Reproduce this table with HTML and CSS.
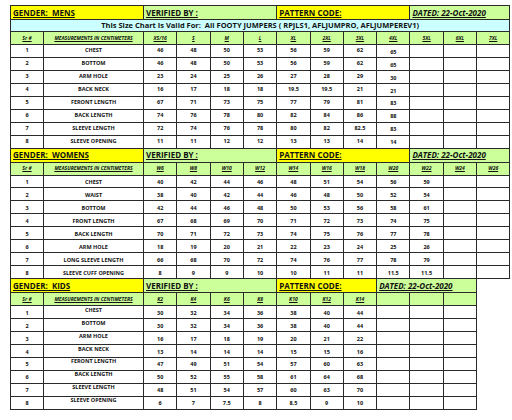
FILE: index.html
```html
<!DOCTYPE html>
<html>
<head>
<meta charset="utf-8">
<link rel="stylesheet" href="styles.css">
</head>
<body>
<div class="sheet">
<table class="chart full">
<colgroup><col class="sr"><col class="ms"><col class="sz"><col class="sz"><col class="sz"><col class="sz"><col class="sz"><col class="sz"><col class="sz"><col class="sz"><col class="sz"><col class="sz"><col class="sz"></colgroup>
<tr class="hdr"><td colspan="2" class="y"><span>GENDER:&nbsp; MENS</span></td><td colspan="4" class="g"><span>VERIFIED BY :</span></td><td colspan="4" class="y"><span>PATTERN CODE:</span></td><td colspan="3" class="g dated"><span>DATED: 22-Oct-2020</span></td></tr>
<tr class="title"><td colspan="13">This Size Chart Is Valid For:&nbsp; All FOOTY JUMPERS ( RPJLS1, AFLJUMPRO, AFLJUMPEREV1)</td></tr>
<tr class="colhdr"><td>Sr #</td><td>MEASUREMENTS IN CENTIMETERS</td><td>XS/16</td><td>S</td><td>M</td><td>L</td><td>XL</td><td>2XL</td><td>3XL</td><td>4XL</td><td>5XL</td><td>6XL</td><td>7XL</td></tr>
<tr class="data"><td>1</td><td>CHEST</td><td>46</td><td>48</td><td>50</td><td>53</td><td>56</td><td>59</td><td>62</td><td class="low">65</td><td></td><td></td><td></td></tr>
<tr class="data"><td>2</td><td>BOTTOM</td><td>46</td><td>48</td><td>50</td><td>53</td><td>56</td><td>59</td><td>62</td><td class="low">65</td><td></td><td></td><td></td></tr>
<tr class="data"><td>3</td><td>ARM HOLE</td><td>23</td><td>24</td><td>25</td><td>26</td><td>27</td><td>28</td><td>29</td><td class="low">30</td><td></td><td></td><td></td></tr>
<tr class="data"><td>4</td><td>BACK NECK</td><td>16</td><td>17</td><td>18</td><td>18</td><td>19.5</td><td>19.5</td><td>21</td><td class="low">21</td><td></td><td></td><td></td></tr>
<tr class="data"><td>5</td><td>FERONT LENGTH</td><td>67</td><td>71</td><td>73</td><td>75</td><td>77</td><td>79</td><td>81</td><td class="low">83</td><td></td><td></td><td></td></tr>
<tr class="data"><td>6</td><td>BACK LENGTH</td><td>74</td><td>76</td><td>78</td><td>80</td><td>82</td><td>84</td><td>86</td><td class="low">88</td><td></td><td></td><td></td></tr>
<tr class="data"><td>7</td><td>SLEEVE LENGTH</td><td>72</td><td>74</td><td>76</td><td>78</td><td>80</td><td>82</td><td>82.5</td><td class="low">83</td><td></td><td></td><td></td></tr>
<tr class="data"><td>8</td><td>SLEEVE OPENING</td><td>11</td><td>11</td><td>12</td><td>12</td><td>13</td><td>13</td><td>14</td><td class="low">14</td><td></td><td></td><td></td></tr>

<tr class="hdr"><td colspan="2" class="y"><span>GENDER:&nbsp; WOMENS</span></td><td colspan="4" class="g"><span>VERIFIED BY :</span></td><td colspan="4" class="y"><span>PATTERN CODE:</span></td><td colspan="3" class="g dated"><span>DATED: 22-Oct-2020</span></td></tr>
<tr class="colhdr"><td>Sr #</td><td>MEASUREMENTS IN CENTIMETERS</td><td>W6</td><td>W8</td><td>W10</td><td>W12</td><td>W14</td><td>W16</td><td>W18</td><td>W20</td><td>W22</td><td>W24</td><td>W26</td></tr>
<tr class="data lows"><td>1</td><td>CHEST</td><td>40</td><td>42</td><td>44</td><td>46</td><td>48</td><td>51</td><td>54</td><td>56</td><td>59</td><td></td><td></td></tr>
<tr class="data lows"><td>2</td><td>WAIST</td><td>38</td><td>40</td><td>42</td><td>44</td><td>46</td><td>48</td><td>50</td><td>52</td><td>54</td><td></td><td></td></tr>
<tr class="data lows"><td>3</td><td>BOTTOM</td><td>42</td><td>44</td><td>46</td><td>48</td><td>50</td><td>53</td><td>56</td><td>58</td><td>61</td><td></td><td></td></tr>
<tr class="data lows"><td>4</td><td>FRONT LENGTH</td><td>67</td><td>68</td><td>69</td><td>70</td><td>71</td><td>72</td><td>73</td><td>74</td><td>75</td><td></td><td></td></tr>
<tr class="data lows"><td>5</td><td>BACK LENGTH</td><td>70</td><td>71</td><td>72</td><td>73</td><td>74</td><td>75</td><td>76</td><td>77</td><td>78</td><td></td><td></td></tr>
<tr class="data lows"><td>6</td><td>ARM HOLE</td><td>18</td><td>19</td><td>20</td><td>21</td><td>22</td><td>23</td><td>24</td><td>25</td><td>26</td><td></td><td></td></tr>
<tr class="data lows"><td>7</td><td>LONG SLEEVE LENGTH</td><td>66</td><td>68</td><td>70</td><td>72</td><td>74</td><td>76</td><td>77</td><td>78</td><td>79</td><td></td><td></td></tr>
<tr class="data lows"><td>8</td><td>SLEEVE CUFF OPENING</td><td>8</td><td>9</td><td>9</td><td>10</td><td>10</td><td>11</td><td>11</td><td>11.5</td><td>11.5</td><td></td><td></td></tr>
</table>

<table class="chart kids">
<colgroup><col class="sr"><col class="ms"><col class="sz"><col class="sz"><col class="sz"><col class="sz"><col class="sz"><col class="sz"><col class="sz"><col class="sz"><col class="sz"><col class="sz"></colgroup>
<tr class="hdr"><td colspan="2" class="y"><span>GENDER:&nbsp; KIDS</span></td><td colspan="4" class="g"><span>VERIFIED BY :</span></td><td colspan="3" class="y"><span>PATTERN CODE:</span></td><td colspan="3" class="g dated"><span>DATED: 22-Oct-2020</span></td></tr>
<tr class="colhdr"><td>Sr #</td><td>MEASUREMENTS IN CENTIMETERS</td><td>K2</td><td>K4</td><td>K6</td><td>K8</td><td>K10</td><td>K12</td><td>K14</td><td></td><td></td><td></td></tr>
<tr class="data lows"><td>1</td><td class="hi">CHEST</td><td>30</td><td>32</td><td>34</td><td>36</td><td>38</td><td>40</td><td>44</td><td></td><td></td><td></td></tr>
<tr class="data lows"><td>2</td><td class="hi">BOTTOM</td><td>30</td><td>32</td><td>34</td><td>36</td><td>38</td><td>40</td><td>44</td><td></td><td></td><td></td></tr>
<tr class="data lows"><td>3</td><td class="hi">ARM HOLE</td><td>16</td><td>17</td><td>18</td><td>19</td><td>20</td><td>21</td><td>22</td><td></td><td></td><td></td></tr>
<tr class="data lows"><td>4</td><td class="hi">BACK NECK</td><td>13</td><td>14</td><td>14</td><td>14</td><td>15</td><td>15</td><td>16</td><td></td><td></td><td></td></tr>
<tr class="data lows"><td>5</td><td class="hi">FERONT LENGTH</td><td>47</td><td>49</td><td>51</td><td>54</td><td>57</td><td>60</td><td>63</td><td></td><td></td><td></td></tr>
<tr class="data lows"><td>6</td><td class="hi">BACK LENGTH</td><td>50</td><td>52</td><td>55</td><td>58</td><td>61</td><td>64</td><td>68</td><td></td><td></td><td></td></tr>
<tr class="data lows"><td>7</td><td class="hi">SLEEVE LENGTH</td><td>48</td><td>51</td><td>54</td><td>57</td><td>60</td><td>63</td><td>70</td><td></td><td></td><td></td></tr>
<tr class="data lows"><td>8</td><td class="hi">SLEEVE OPENING</td><td>6</td><td>7</td><td>7.5</td><td>8</td><td>8.5</td><td>9</td><td>10</td><td></td><td></td><td></td></tr>
</table>
</div>
</body>
</html>
```
FILE: styles.css
```css
html, body {
  margin: 0;
  padding: 0;
  background: #ffffff;
}
.sheet {
  padding: 5px 0 0 10px;
  font-family: "Open Sans", "Noto Sans", sans-serif;
  color: #111;
}
.chart {
  border-collapse: collapse;
  table-layout: fixed;
}
.full { width: 500px; }
.kids { width: 466.5px; margin-top: -1px; }
col.sr { width: 33px; }
col.ms { width: 100px; }
col.sz { width: 33.3px; }
.chart td {
  border: 1px solid #2a2a2a;
  padding: 0;
  font-weight: 700;
  font-size: 5.5px;
  line-height: 1;
  text-align: center;
  vertical-align: middle;
  white-space: nowrap;
  overflow: hidden;
  background: #fff;
}
.chart .hdr td {
  height: 13px;
  font-size: 8px;
  text-align: left;
  padding-left: 2px;
}
.chart .hdr span { text-decoration: underline; }
.chart .hdr .dated { font-style: italic; }
.chart td.y { background: #ffff00; }
.chart td.g { background: #ccff99; }
.chart .title td {
  background: #ccffff;
  font-size: 7.5px;
  height: 11px;
}
.chart .colhdr td {
  background: #ccff99;
  font-style: italic;
  text-decoration: underline;
  font-size: 5px;
  height: 12px;
}
.chart .data td { height: 11.95px; }
.chart td.low, .chart .lows td { padding-top: 3px; height: 8.95px; }
.chart .lows td.hi { padding-top: 0; padding-bottom: 3px; }
```
